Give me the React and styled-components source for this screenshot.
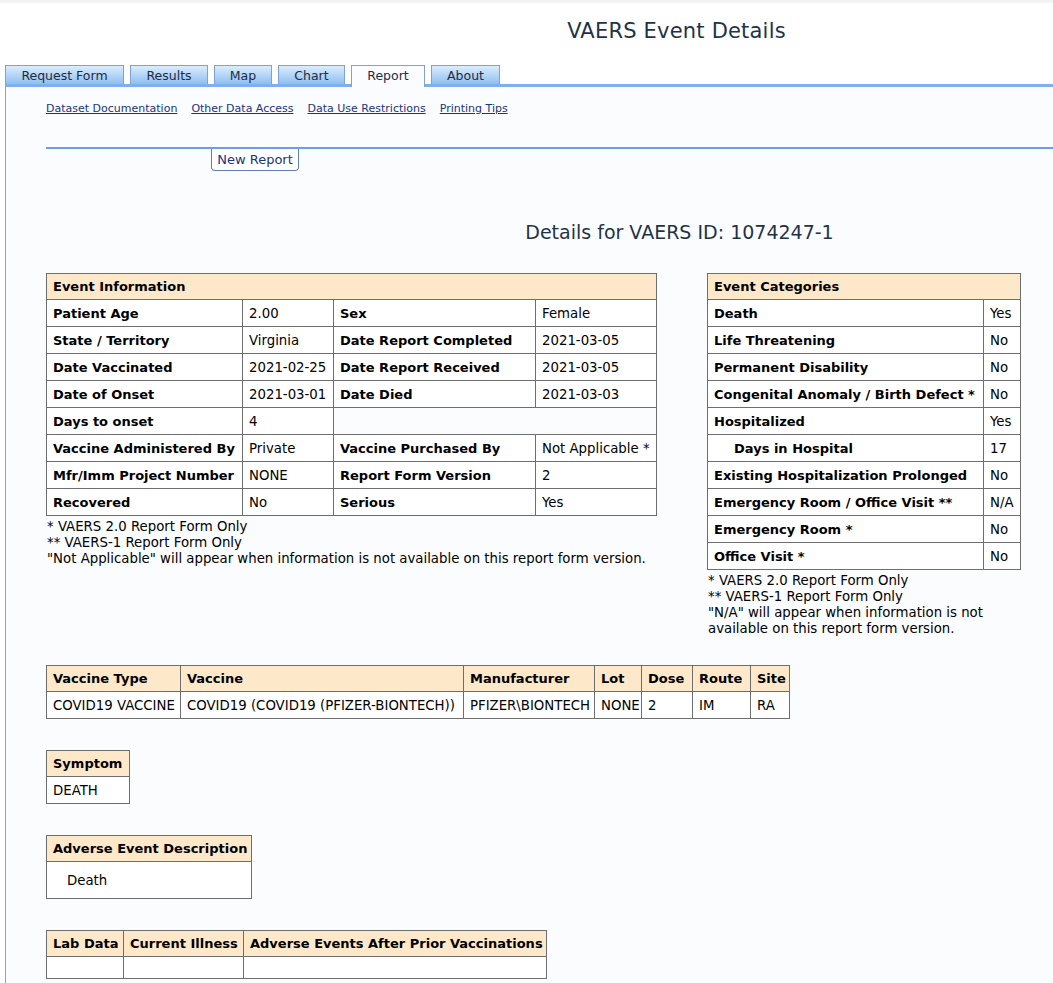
import React from "react";
import styled, { createGlobalStyle } from "styled-components";

const Global = createGlobalStyle`
  html, body { margin: 0; padding: 0; background: #ffffff; }
  body { font-family: "DejaVu Sans", Verdana, sans-serif; color: #000; }
`;

const TopStrip = styled.div`
  height: 3px;
  background: #f3f3f3;
`;

const Header = styled.header`
  display: flex;
  justify-content: center;
  padding-left: 300px;
  height: 59px;
  align-items: flex-start;
`;

const Title = styled.h1`
  margin: 16px 0 0;
  font-size: 21px;
  font-weight: normal;
  color: #1f3347;
  letter-spacing: 0.2px;
`;

const TabBar = styled.nav`
  display: flex;
  gap: 6px;
  padding-left: 5px;
  height: 22px;
  align-items: flex-end;
  position: relative;
  z-index: 1;
`;

const Tab = styled.div`
  width: ${(p) => p.$w}px;
  display: flex;
  align-items: center;
  justify-content: center;
  box-sizing: border-box;
  border: 1px solid #7ba3da;
  border-bottom: none;
  font-size: 12.5px;
  color: #1d2c44;
  padding-top: 1px;
  background: ${(p) =>
    p.$active ? "#fbfcfe" : "linear-gradient(#dbedfd, #8fbef2)"};
  margin-bottom: ${(p) => (p.$active ? "-3px" : "0")};
  padding-bottom: ${(p) => (p.$active ? "3px" : "0")};
  height: ${(p) => (p.$active ? "22px" : "19px")};
`;

const Panel = styled.main`
  border-top: 3px solid #7eb0f0;
  border-left: 1px solid #7ca6e0;
  margin-left: 5px;
  background: #fbfcfe;
  padding: 12px 0 40px 40px;
  min-height: 880px;
`;

const Links = styled.div`
  display: flex;
  gap: 14px;
  height: 18px;
  align-items: center;
`;

const Link = styled.a`
  font-size: 11px;
  color: #1a3382;
  text-decoration: underline;
  cursor: pointer;
`;

const Rule = styled.div`
  margin-top: 30px;
  height: 2px;
  background: #6c9ee2;
`;

const ButtonRow = styled.div`
  padding-left: 165px;
`;

const NewReport = styled.button`
  font-family: inherit;
  font-size: 13px;
  color: #1a3382;
  background: #ffffff;
  border: 1px solid #5f7fb5;
  border-top: none;
  border-radius: 0 0 4px 4px;
  height: 22px;
  width: 88px;
  padding: 0;
`;

const SubTitle = styled.h2`
  margin: 50px 0 0;
  padding-left: 260px;
  text-align: center;
  font-size: 19px;
  font-weight: normal;
  color: #1f3347;
`;

const TopTables = styled.div`
  display: flex;
  gap: 50px;
  margin-top: 30px;
  align-items: flex-start;
`;

const Block = styled.section`
  display: flex;
  flex-direction: column;
  margin-top: ${(p) => p.$mt || 0}px;
`;

const Table = styled.table`
  border-collapse: collapse;
  table-layout: fixed;
  width: ${(p) => p.$w}px;
  font-size: 13px;
  background: #ffffff;
`;

const Col = styled.col`
  width: ${(p) => p.$w}px;
`;

const Th = styled.th`
  background: #fde8ca;
  border: 1px solid #6e6e6e;
  text-align: left;
  font-weight: bold;
  height: 26px;
  padding: 0 6px;
  white-space: nowrap;
  box-sizing: border-box;
`;

const Label = styled.td`
  border: 1px solid #6e6e6e;
  font-weight: bold;
  height: 26px;
  padding: 0 6px 0 ${(p) => (p.$indent ? 26 : 6)}px;
  white-space: nowrap;
`;

const Td = styled.td`
  border: 1px solid #6e6e6e;
  height: ${(p) => p.$h || 26}px;
  padding: 0 ${(p) => (p.$pad ? 20 : 6)}px;
  white-space: nowrap;
  font-size: 13.3px;
  background: ${(p) => (p.$blank ? "#fbfcfe" : "#ffffff")};
`;

const Notes = styled.div`
  font-size: 13.3px;
  line-height: 16px;
  margin-top: 3px;
  padding-left: 1px;
  width: ${(p) => p.$w || "auto"};
`;

const eventRows = [
  ["Patient Age", "2.00", "Sex", "Female"],
  ["State / Territory", "Virginia", "Date Report Completed", "2021-03-05"],
  ["Date Vaccinated", "2021-02-25", "Date Report Received", "2021-03-05"],
  ["Date of Onset", "2021-03-01", "Date Died", "2021-03-03"],
  ["Days to onset", "4", null, null],
  ["Vaccine Administered By", "Private", "Vaccine Purchased By", "Not Applicable *"],
  ["Mfr/Imm Project Number", "NONE", "Report Form Version", "2"],
  ["Recovered", "No", "Serious", "Yes"],
];

const catRows = [
  ["Death", "Yes"],
  ["Life Threatening", "No"],
  ["Permanent Disability", "No"],
  ["Congenital Anomaly / Birth Defect *", "No"],
  ["Hospitalized", "Yes"],
  ["Days in Hospital", "17", true],
  ["Existing Hospitalization Prolonged", "No"],
  ["Emergency Room / Office Visit **", "N/A"],
  ["Emergency Room *", "No"],
  ["Office Visit *", "No"],
];

const vaxCols = [
  ["Vaccine Type", 134, "COVID19 VACCINE"],
  ["Vaccine", 283, "COVID19 (COVID19 (PFIZER-BIONTECH))"],
  ["Manufacturer", 131, "PFIZER\\BIONTECH"],
  ["Lot", 47, "NONE"],
  ["Dose", 51, "2"],
  ["Route", 58, "IM"],
  ["Site", 39, "RA"],
];

const labCols = [
  ["Lab Data", 77],
  ["Current Illness", 120],
  ["Adverse Events After Prior Vaccinations", 303],
];

export default function App() {
  const tabs = [
    ["Request Form", 119],
    ["Results", 78],
    ["Map", 58],
    ["Chart", 67],
    ["Report", 74, true],
    ["About", 69],
  ];
  return (
    <>
      <Global />
      <TopStrip />
      <Header>
        <Title>VAERS Event Details</Title>
      </Header>
      <TabBar>
        {tabs.map(([t, w, a]) => (
          <Tab key={t} $w={w} $active={a}>
            {t}
          </Tab>
        ))}
      </TabBar>
      <Panel>
        <Links>
          <Link>Dataset Documentation</Link>
          <Link>Other Data Access</Link>
          <Link>Data Use Restrictions</Link>
          <Link>Printing Tips</Link>
        </Links>
        <Rule />
        <ButtonRow>
          <NewReport>New Report</NewReport>
        </ButtonRow>
        <SubTitle>Details for VAERS ID: 1074247-1</SubTitle>
        <TopTables>
          <Block>
            <Table $w={610}>
              <colgroup>
                <Col $w={196} />
                <Col $w={91} />
                <Col $w={202} />
                <Col $w={121} />
              </colgroup>
              <thead>
                <tr>
                  <Th colSpan={4}>Event Information</Th>
                </tr>
              </thead>
              <tbody>
                {eventRows.map((r) => (
                  <tr key={r[0]}>
                    <Label>{r[0]}</Label>
                    <Td>{r[1]}</Td>
                    {r[2] === null ? (
                      <Td colSpan={2} $blank />
                    ) : (
                      <>
                        <Label>{r[2]}</Label>
                        <Td>{r[3]}</Td>
                      </>
                    )}
                  </tr>
                ))}
              </tbody>
            </Table>
            <Notes>
              * VAERS 2.0 Report Form Only
              <br />
              ** VAERS-1 Report Form Only
              <br />
              "Not Applicable" will appear when information is not available on this report form version.
            </Notes>
          </Block>
          <Block>
            <Table $w={313}>
              <colgroup>
                <Col $w={276} />
                <Col $w={37} />
              </colgroup>
              <thead>
                <tr>
                  <Th colSpan={2}>Event Categories</Th>
                </tr>
              </thead>
              <tbody>
                {catRows.map(([l, v, ind]) => (
                  <tr key={l}>
                    <Label $indent={ind}>{l}</Label>
                    <Td>{v}</Td>
                  </tr>
                ))}
              </tbody>
            </Table>
            <Notes $w="290px">
              * VAERS 2.0 Report Form Only
              <br />
              ** VAERS-1 Report Form Only
              <br />
              "N/A" will appear when information is not available on this report form version.
            </Notes>
          </Block>
        </TopTables>

        <Block $mt={28}>
          <Table $w={743}>
            <colgroup>
              {vaxCols.map(([h, w]) => (
                <Col key={h} $w={w} />
              ))}
            </colgroup>
            <thead>
              <tr>
                {vaxCols.map(([h]) => (
                  <Th key={h}>{h}</Th>
                ))}
              </tr>
            </thead>
            <tbody>
              <tr>
                {vaxCols.map(([h, , v]) => (
                  <Td key={h}>{v}</Td>
                ))}
              </tr>
            </tbody>
          </Table>
        </Block>

        <Block $mt={31}>
          <Table $w={84}>
            <thead>
              <tr>
                <Th>Symptom</Th>
              </tr>
            </thead>
            <tbody>
              <tr>
                <Td>DEATH</Td>
              </tr>
            </tbody>
          </Table>
        </Block>

        <Block $mt={31}>
          <Table $w={206}>
            <thead>
              <tr>
                <Th>Adverse Event Description</Th>
              </tr>
            </thead>
            <tbody>
              <tr>
                <Td $h={36} $pad>
                  Death
                </Td>
              </tr>
            </tbody>
          </Table>
        </Block>

        <Block $mt={31}>
          <Table $w={500}>
            <colgroup>
              {labCols.map(([h, w]) => (
                <Col key={h} $w={w} />
              ))}
            </colgroup>
            <thead>
              <tr>
                {labCols.map(([h]) => (
                  <Th key={h}>{h}</Th>
                ))}
              </tr>
            </thead>
            <tbody>
              <tr>
                {labCols.map(([h]) => (
                  <Td key={h} $h={21} />
                ))}
              </tr>
            </tbody>
          </Table>
        </Block>
      </Panel>
    </>
  );
}
